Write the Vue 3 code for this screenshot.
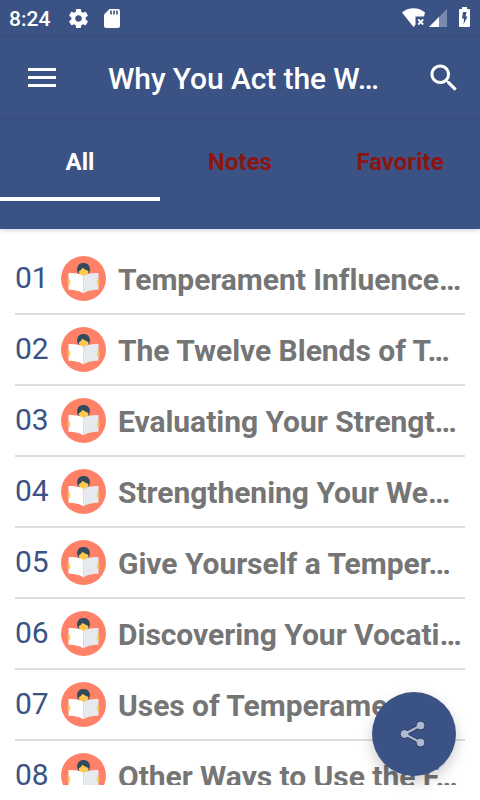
<script setup>
const tabs = ['All', 'Notes', 'Favorite']
const chapters = [
  'Temperament Influence…',
  'The Twelve Blends of T…',
  'Evaluating Your Strengt…',
  'Strengthening Your We…',
  'Give Yourself a Temper…',
  'Discovering Your Vocati…',
  'Uses of Temperament…',
  'Other Ways to Use the F…',
]
</script>

<template>
  <div class="screen">
    <header class="head">
      <div class="status">
        <span class="clock">8:24</span>
        <svg class="gear" width="23" height="23" viewBox="0 0 24 24"><path fill="#fff" d="M19.430 12.980c.04-.32.07-.64.07-.98s-.03-.66-.07-.98l2.110-1.650c.19-.15.24-.42.12-.64l-2-3.460c-.12-.22-.39-.3-.61-.22l-2.490 1c-.52-.4-1.080-.73-1.690-.98l-.38-2.650C14.460 2.180 14.250 2 14 2h-4c-.25 0-.46.18-.49.42l-.38 2.650c-.61.25-1.170.59-1.690.98l-2.490-1c-.23-.09-.49 0-.61.22l-2 3.460c-.13.22-.07.49.12.64l2.110 1.650c-.04.32-.07.65-.07.98s.03.66.07.98l-2.110 1.650c-.19.15-.24.42-.12.64l2 3.460c.12.22.39.3.61.22l2.490-1c.52.4 1.080.73 1.690.98l.38 2.650c.03.24.24.42.49.42h4c.25 0 .46-.18.49-.42l.38-2.650c.61-.25 1.170-.59 1.690-.98l2.490 1c.23.09.49 0 .61-.22l2-3.460c.12-.22.07-.49-.12-.64zM12 15.500c-1.930 0-3.500-1.570-3.500-3.500s1.570-3.500 3.500-3.500 3.500 1.570 3.500 3.500-1.570 3.500-3.500 3.500z"/></svg>
        <svg class="sd" width="16" height="19" viewBox="0 0 16 19"><path fill="#fff" d="M5.500 0H14a2 2 0 0 1 2 2v15a2 2 0 0 1-2 2H2a2 2 0 0 1-2-2V5.500z"/><path stroke="#3b5284" stroke-width="1.600" d="M7 1.500v4M10 1.500v4M13 1.500v4"/></svg>
        <svg class="signals" width="72" height="24" viewBox="0 0 72 24"><path fill="#fff" d="M4 6.500C10 .8 21 .8 27 6.500L26 10.500H17.500V18.800L15.500 20.900z"/><path stroke="#fff" stroke-width="1.800" d="m20.200 13.500 5 5m0-5-5 5"/><path fill="#7b8bb0" d="M49 3v18H31z"/><path fill="#fff" d="M41 11v10H31z"/><path fill="#fff" d="M64 1h5v2h2q1 0 1 1v16q0 1-1 1H62q-1 0-1-1V4q0-1 1-1h2z"/><path fill="#3b5284" d="M65 6h3.500l-1 4.500H69.500L65.500 18.500l.500-6H64z"/></svg>
      </div>
      <div class="toolbar">
        <svg class="menu" width="28" height="19" viewBox="0 0 28 19"><path fill="#fff" d="M0 0h28v3H0zM0 8h28v3H0zM0 16h28v3H0z"/></svg>
        <h1>Why You Act the W…</h1>
        <svg class="search" width="36" height="36" viewBox="0 0 24 24"><path fill="#fff" d="M15.500 14h-.79l-.28-.27C15.410 12.590 16 11.110 16 9.500 16 5.910 13.090 3 9.500 3S3 5.910 3 9.500 5.910 16 9.500 16c1.610 0 3.090-.59 4.230-1.570l.27.28v.79l5 4.990L20.490 19l-4.990-5zm-6 0C7.010 14 5 11.990 5 9.500S7.010 5 9.500 5 14 7.010 14 9.500 11.990 14 9.500 14z"/></svg>
      </div>
      <nav class="tabs">
        <div v-for="(tab, i) in tabs" :key="tab" class="tab" :class="{ active: i === 0 }">{{ tab }}</div>
      </nav>
    </header>

    <ul class="list">
      <li v-for="(title, i) in chapters" :key="title" class="row">
        <span class="num">0{{ i + 1 }}</span>
        <svg class="reader" width="45" height="45" viewBox="0 0 45 45">
          <circle cx="22.500" cy="22.500" r="22.500" fill="#ff8268"/>
          <path fill="#324a5e" d="M18 17.800C14.800 15.500 15.200 7 22.500 7s7.700 8.500 4.500 10.800z"/>
          <path fill="#ffc84f" d="M17.700 15.500C19 14.500 20.500 13.800 21.500 11.700 23 13.300 25.500 13.800 27 14.800L27.500 15.700C26.800 18.500 25 20.200 22.500 20.200S18.200 18.300 17.700 15.500z"/>
          <path fill="#fff" d="M7.500 17c6-.3 11 .3 15 3V37.500C18.500 34.700 14 34 7.500 33.800z"/>
          <path fill="#e6e9ee" d="M37.500 17c-6-.3-11 .3-15 3V37.500c4-2.800 8.500-3.500 15-3.700z"/>
          <rect x="6.800" y="23.500" width="2.300" height="5.600" rx="1" fill="#ffc84f"/>
          <rect x="36" y="23.500" width="2.300" height="5.600" rx="1" fill="#ffc84f"/>
        </svg>
        <span class="title">{{ title }}</span>
      </li>
    </ul>

    <button class="fab" aria-label="Share">
      <svg width="28" height="30" viewBox="0 0 28 30">
        <g fill="#2b3a63" stroke="#2b3a63"><path fill="none" stroke-width="4" d="M21.500 6.500 5.500 15l16 8.500"/><circle cx="21.500" cy="6.500" r="4.300"/><circle cx="5.500" cy="15" r="4.300"/><circle cx="21.500" cy="23.500" r="4.300"/></g>
        <g fill="#b1b9d0" stroke="#b1b9d0"><path fill="none" stroke-width="2.200" d="M21.500 6.500 5.500 15l16 8.500"/><circle cx="21.500" cy="6.500" r="3.500"/><circle cx="5.500" cy="15" r="3.500"/><circle cx="21.500" cy="23.500" r="3.500"/></g>
      </svg>
    </button>
  </div>
</template>

<style>
body { margin: 0; background: #fff; }
</style>

<style scoped>
.screen {
  position: relative;
  display: flex;
  flex-direction: column;
  box-sizing: border-box;
  width: 480px;
  height: 800px;
  padding-bottom: 15px;
  overflow: hidden;
  background: #fff;
  font-family: Roboto, sans-serif;
}
.head {
  flex: none;
  height: 229px;
  background: #3b5284;
  color: #fff;
  box-shadow: 0 1px 5px rgba(0, 0, 0, 0.2);
}
.status {
  display: flex;
  align-items: center;
  height: 36px;
  box-sizing: border-box;
  padding: 0 10px 0 9px;
  box-shadow: inset 0 -1px 1px rgba(0, 0, 0, 0.08);
}
.clock { width: 58px; padding-top: 1px; font-size: 21px; font-weight: 500; line-height: 36px; }
.sd { margin-left: 14px; }
.signals { margin-left: auto; }
.toolbar {
  display: flex;
  align-items: center;
  box-sizing: border-box;
  height: 84px;
  padding: 0 18px 0 28px;
  border-bottom: 1px solid #374d7e;
}
h1 {
  flex: 1;
  margin: 2px 0 0 52px;
  font-size: 30px;
  font-weight: 500;
  letter-spacing: -0.1px;
  line-height: 40px;
  white-space: nowrap;
}
.tabs { display: flex; height: 81px; }
.tab {
  flex: 1;
  box-sizing: border-box;
  padding-top: 26px;
  border-bottom: 4px solid transparent;
  color: #8b1512;
  font-size: 24px;
  font-weight: 700;
  line-height: 32px;
  text-align: center;
}
.active { color: #fff; border-color: #fff; }
.list {
  flex: 1;
  min-height: 0;
  margin: 0;
  padding: 15px 15px 0;
  overflow: hidden;
  list-style: none;
}
.row {
  display: flex;
  align-items: flex-start;
  box-sizing: border-box;
  height: 71px;
  border-bottom: 2px solid #dedede;
}
.num {
  width: 46px;
  padding-top: 14px;
  color: #3b5284;
  font-size: 30px;
  line-height: 40px;
}
.reader { flex: none; margin-top: 12px; }
.title {
  margin-left: 12px;
  padding-top: 16px;
  color: #757575;
  font-size: 30px;
  font-weight: 700;
  letter-spacing: -0.03px;
  line-height: 40px;
  white-space: nowrap;
}
.fab {
  position: absolute;
  right: 24px;
  bottom: 24px;
  display: flex;
  align-items: center;
  justify-content: center;
  width: 84px;
  height: 84px;
  padding: 0 3px 0 0;
  border: 0;
  border-radius: 50%;
  background: #3b5284;
  box-shadow: 0 6px 14px rgba(0, 0, 0, 0.2);
}
</style>
